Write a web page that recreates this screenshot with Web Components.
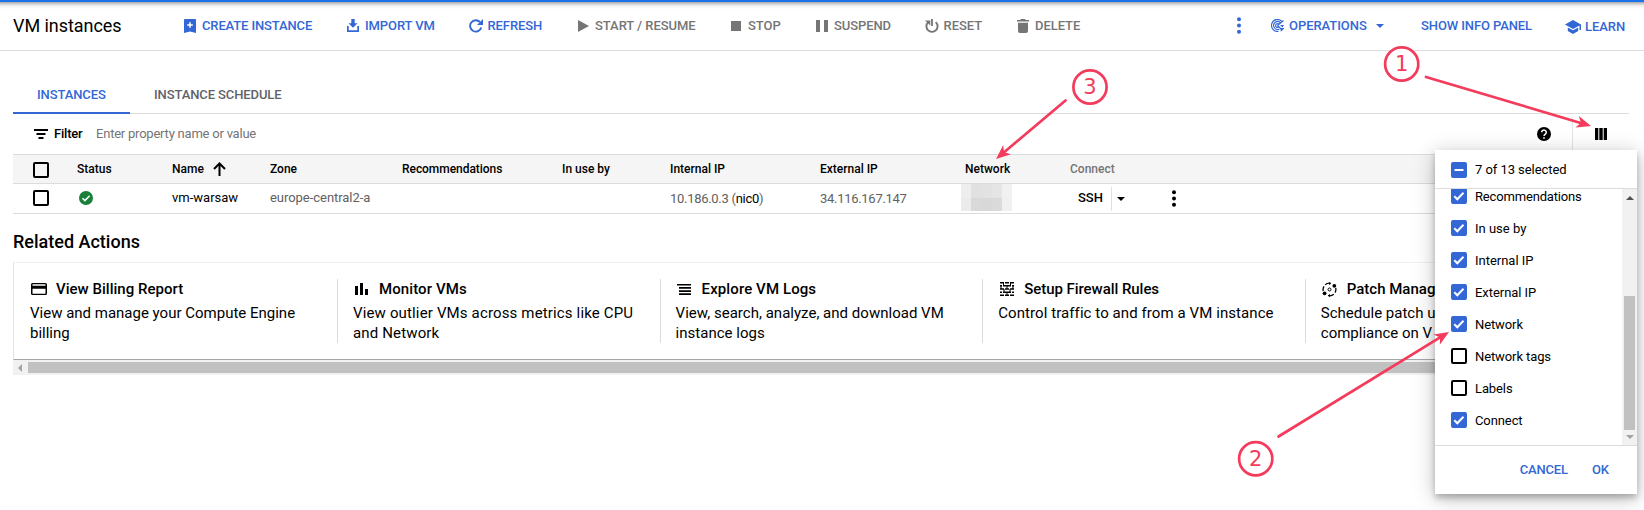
<!DOCTYPE html>
<html lang="en">
<head>
<meta charset="utf-8">
<title>VM instances</title>
<style>
html,body{margin:0;background:#fff;height:510px;overflow:hidden}
body{font-family:Roboto,"Liberation Sans",sans-serif;color:#000;position:relative}
</style>
</head>
<body>
<vm-page></vm-page>
<script>
const ICONS = {
  create: [12,14,'<path d="M1 0h10a1 1 0 0 1 1 1v13l-6-1.500L0 14V1a1 1 0 0 1 1-1z"/><path d="M6 3.200v5.600M3.200 6h5.600" stroke="#fff" stroke-width="1.500"/>'],
  import: [12,13,'<path d="M4.300 0h3.400v4.300H10.500L6 8.800 1.500 4.300h2.800zM0 7h1.700v4.300h8.600V7H12v6H0z"/>'],
  refresh: [14,14,'<path d="M12.300 8.500A5.700 5.700 0 1 1 11 3" fill="none" stroke="currentColor" stroke-width="1.900"/><path d="M14 0v6H8z"/>'],
  play: [11,12,'<path d="M0 0l11 6L0 12z"/>'],
  stop: [10,10,'<path d="M0 0h10v10H0z"/>'],
  pause: [12,12,'<path d="M0 0h4v12H0zM8 0h4v12H8z"/>'],
  reset: [14,14,'<path d="M3.300 3.100A5.600 5.600 0 1 0 10.700 3.100" fill="none" stroke="currentColor" stroke-width="1.900"/><path d="M6.100 0h1.800v7H6.100zM0 1.500h5.300v5z"/>'],
  trash: [12,14,'<path d="M4 0h4l.8.9H12v1.700H0V.9h3.200zM1 3.800h10V12a2 2 0 0 1-2 2H3a2 2 0 0 1-2-2z"/>'],
  dots: [4,17,'<circle cx="2" cy="2.300" r="2"/><circle cx="2" cy="8.500" r="2"/><circle cx="2" cy="14.700" r="2"/>'],
  ops: [13,13,'<g fill="none" stroke="currentColor" stroke-width="1.150"><path d="M7.500 12.400A6 6 0 1 1 10.800 2.300M8.500 9.900A3.900 3.900 0 1 1 9.300 3.700M7.700 8A1.900 1.900 0 1 1 8.200 5.600M6.500 6.500l4 3.700M6.500 6.500L12.500 1.500"/></g><path d="M9 6h4L11.500 8.500zM9.300 9h3.700v.8L9.800 12.800z"/>'],
  caret: [8,4,'<path d="M0 0h8L4 4z"/>'],
  learn: [16,14,'<path d="M8 0l8 4.500V10h-1.500V5.500L8 9 0 4.500zM2.800 7.500L8 10.300l5.200-2.800v3.400L8 14l-5.200-3.100z"/>'],
  filter: [14,10,'<path d="M0 0h14v2H0zM2.500 4h9v2h-9zM4.500 8h5v2h-5z"/>'],
  help: [14,14,'<circle cx="7" cy="7" r="7"/><path d="M4.700 5.300a2.300 2.200 0 1 1 3.600 1.800Q7 8 7 9" fill="none" stroke="#fff" stroke-width="1.500"/><path d="M6.200 10.200h1.600v1.600H6.200z" fill="#fff"/>'],
  columns: [12,12,'<path d="M0 0h3.300v12H0zM4.300 0h3.400v12H4.300zM8.700 0H12v12H8.700z"/>'],
  up: [13,14,'<path d="M6.500 14V1.500M1 7l5.500-5.500L12 7" fill="none" stroke="currentColor" stroke-width="2"/>'],
  ok: [14,14,'<circle cx="7" cy="7" r="7"/><path d="M3.500 7.200l2.400 2.400 4.700-4.800" fill="none" stroke="#fff" stroke-width="1.500"/>'],
  card: [16,12,'<path fill-rule="evenodd" d="M1.500 0h13A1.500 1.500 0 0 1 16 1.500v9a1.500 1.500 0 0 1-1.500 1.500h-13A1.500 1.500 0 0 1 0 10.500v-9A1.500 1.500 0 0 1 1.500 0zM1.500 1.300v1.400h13V1.300zM1.500 5.700v5h13v-5z"/>'],
  bars: [13,12,'<path d="M0 3h3v9H0zM5 0h3v12H5zM10 6h3v6h-3z"/>'],
  logs: [14,11,'<path d="M0 0h14v1.500H0zM2 3h12v1.700H2zM2 6.200h12v1.700H2zM2 9.300h12V11H2z"/>'],
  wall: [14,14,'<path d="M0 .7h4M5 .7h4M10 .7h4M0 3.800h2M3 3.800h8M12 3.800h2M0 7h4M5 7h4M10 7h4M0 10.200h2M3 10.200h8M12 10.200h2M0 13.300h4M5 13.300h4M10 13.300h4" stroke="currentColor" stroke-width="1.400"/><path d="M3.500 1v3M10.500 1v3M7 4v3M1 4v3M13 4v3M4 7v3M10 7v3M7 10v3" stroke="currentColor" stroke-width="1"/>'],
  patch: [15,15,'<g fill="none" stroke="currentColor" stroke-width="1.300"><path d="M1.200 9A6.300 6.300 0 0 1 2 4.300M3.200 2.700A6.300 6.300 0 0 1 8.500 1.300M13.700 6A6.300 6.300 0 0 1 13 10.700M11.800 12.300A6.300 6.300 0 0 1 6.500 13.700"/><circle cx="7.500" cy="7.500" r="1.500" stroke-width="1"/></g><circle cx="12.300" cy="3.800" r="1.900"/><circle cx="2.600" cy="11.300" r="1.900"/><path d="M7 0l2.300 1.600L7 3zM8 15l-2.300-1.600L8 12z"/>']
};
const define = (name, css, html) => customElements.define(name, class extends HTMLElement {
  connectedCallback() {
    if (this.shadowRoot) return;
    const a = n => this.getAttribute(n) ?? '';
    this.attachShadow({mode:'open'}).innerHTML =
      `<style>:host{display:block;box-sizing:border-box}${css}</style>` + (typeof html === 'function' ? html(a) : html);
  }
});

define('vm-icon', ':host{display:block;flex:none;line-height:0}svg{display:block;fill:currentColor}', a => {
  const [w,h,p] = ICONS[a('name')];
  return `<svg width="${w}" height="${h}" viewBox="0 0 ${w} ${h}">${p}</svg>`;
});

define('vm-check', `:host{flex:none;width:16px;height:16px}
  div{box-sizing:border-box;width:16px;height:16px;border:2px solid #000;border-radius:2px}
  :host([state]) div{background:#3367d6;border-color:#3367d6}
  svg{display:block;width:12px;height:12px}`, a => {
  const s = a('state');
  const d = s === 'on' ? 'M1.300 6.200l3 3 6.200-6.400' : s === 'some' ? 'M1.500 6h9' : '';
  return `<div>${d ? `<svg viewBox="0 0 12 12"><path d="${d}" fill="none" stroke="#fff" stroke-width="2"/></svg>` : ''}</div>`;
});

/* Toolbar button: --iw is the width of the icon column, --ls the label's letter spacing */
define('vm-button', `:host{display:grid;grid-auto-flow:column;justify-content:start;align-items:center;color:#3367d6;
    font:500 13px/20px Roboto,sans-serif;letter-spacing:var(--ls,-.05px);white-space:nowrap}
  :host([off]){color:#757575}.i{display:flex;width:var(--iw,18px)}`,
  a => `${a('icon') ? `<span class="i"><vm-icon name="${a('icon')}"></vm-icon></span>` : ''}<span><slot></slot></span>`);

define('vm-toolbar', `:host{height:51px;border-bottom:1px solid #dcdcdc;background:linear-gradient(#1a73e8 0 2px,#a8a8a8 2px,#d2d2d2 4px,#f2f2f2 6px,#fff 9px)}
  .bar{display:grid;grid-template-columns:171px 163px 122px 109px 153px 85px 109px 92px 220px 34px 105px 45px 144px 1fr;align-items:center;height:51px;padding-left:13px}
  h1{margin:0;font:400 18px/24px Roboto,sans-serif;letter-spacing:-.05px}`,
  `<div class="bar"><h1>VM instances</h1>
  <vm-button icon="create" style="--ls:-.13px">CREATE INSTANCE</vm-button>
  <vm-button icon="import" style="--ls:-.1px">IMPORT VM</vm-button>
  <vm-button icon="refresh" style="--iw:18.500px;--ls:-.1px">REFRESH</vm-button>
  <vm-button icon="play" off style="--iw:17px">START / RESUME</vm-button>
  <vm-button icon="stop" off style="--iw:17px">STOP</vm-button>
  <vm-button icon="pause" off style="--ls:-.1px">SUSPEND</vm-button>
  <vm-button icon="reset" off style="--iw:18.500px">RESET</vm-button>
  <vm-button icon="trash" off>DELETE</vm-button>
  <vm-button icon="dots"></vm-button>
  <vm-button icon="ops">OPERATIONS</vm-button>
  <vm-button icon="caret"></vm-button>
  <vm-button style="--ls:-.1px">SHOW INFO PANEL</vm-button>
  <vm-button icon="learn" style="--iw:20px;padding-top:2px">LEARN</vm-button></div>`);

define('vm-tabs', `:host{display:flex;margin:25px 15px 0 13px;height:38px;border-bottom:1px solid #dcdcdc;font:500 13px/37px Roboto,sans-serif;letter-spacing:-.11px;color:#5f6368}
  span{box-sizing:border-box;height:38px;padding:0 24px}.on{color:#3367d6;width:117px;border-bottom:2px solid #3367d6}`,
  `<span class="on">INSTANCES</span><span>INSTANCE SCHEDULE</span>`);

define('vm-filter', `:host{display:flex;align-items:center;height:40px;margin:0 15px 0 13px;padding-left:21px;font:13px/20px Roboto,sans-serif}
  b{font-weight:500;margin-left:6px;width:42px;letter-spacing:-.2px}.p{color:#757575;flex:1;letter-spacing:-.22px}
  .line{width:1px;height:34px;background:#e3e3e3;margin-left:21px}.c{margin:0 22px 0 22px}`,
  `<vm-icon name="filter"></vm-icon><b>Filter</b><span class="p">Enter property name or value</span>
   <vm-icon name="help"></vm-icon><span class="line"></span><vm-icon name="columns" class="c"></vm-icon>`);

define('vm-table', `:host{margin:0 15px 0 13px;font:13px/20px Roboto,sans-serif}
  .r{display:grid;grid-template-columns:44px 95px 98px 132px 160px 108px 150px 145px 105px 1fr;box-sizing:border-box;height:30px;padding-left:20px;align-items:center;border-bottom:1px solid #dcdcdc}
  .h{background:#f5f5f5;border-top:1px solid #dcdcdc;font-weight:500;font-size:12px}
  .h vm-check{margin-top:2px}.v vm-check,.v>vm-icon{margin-bottom:2px}
  .n{display:flex;gap:9px;align-items:center}.g{color:#616161}.z{padding-bottom:1px;letter-spacing:-.04px}.ip{padding-top:1px;letter-spacing:-.29px}
  .blur{display:grid;grid-template-columns:10px 10px 11px 10px 10px;grid-template-rows:14px 13px;width:51px;margin:-2px 0 0 -4px}
  .s{display:flex;align-items:center;padding-left:8px;font-weight:500}.s i{width:1px;height:24px;background:#e0e0e0;margin:0 5px 0 8px}.s b{font-weight:500;padding-bottom:1px}
  .s .d{margin-left:47px}`,
  `<div class="r h"><vm-check></vm-check><span>Status</span><span class="n">Name <vm-icon name="up"></vm-icon></span><span>Zone</span><span style="letter-spacing:-.05px">Recommendations</span><span>In use by</span><span>Internal IP</span><span>External IP</span><span>Network</span><span style="color:#757575">Connect</span></div>
   <div class="r v"><vm-check></vm-check><vm-icon name="ok" style="color:#188038;margin-left:2px"></vm-icon><span class="z" style="letter-spacing:0">vm-warsaw</span><span class="g z">europe-central2-a</span><span></span><span></span><span class="g ip">10.186.0.3 (<span style="color:#000">nic0</span>)</span><span class="g ip">34.116.167.147</span>
   <span class="blur"><i style="background:#eee"></i><i style="background:#e1e1e1"></i><i style="background:#e2e2e2"></i><i style="background:#e5e5e5"></i><i style="background:#f1f1f1"></i><i style="background:#ebebeb"></i><i style="background:#d9d9d9"></i><i style="background:#d8d8d8"></i><i style="background:#dadada"></i><i style="background:#f0f0f0"></i></span>
   <span class="s"><b>SSH</b><i></i><vm-icon name="caret"></vm-icon><vm-icon name="dots" class="d"></vm-icon></span></div>`);

define('vm-action', `:host{width:322.600px;flex:none;height:64px;padding-left:15px;border-right:1px solid #dcdcdc;font:15px/20px Roboto,sans-serif}
  .t{display:flex;align-items:center;height:20px;font-weight:500;margin-bottom:4px;letter-spacing:var(--tl,0)}
  .i{width:26px;padding-left:var(--ip,1px);box-sizing:border-box}p{margin:0;width:290px;letter-spacing:var(--pl,0)}`,
  a => `<div class="t"><span class="i"><vm-icon name="${a('icon')}"></vm-icon></span>${a('title')}</div><p><slot></slot></p>`);

define('vm-actions', `:host{margin:16px 15px 0 13px}
  h2{margin:0 0 8px;font:500 18px/24px Roboto,sans-serif}
  .box{display:flex;box-sizing:border-box;height:98px;overflow:hidden;padding-top:16px;border-top:1px solid #f1f1f1;border-left:1px solid #e3e3e3;border-bottom:1px solid #a6a6a6}
  .sb{display:flex;align-items:center;height:15px;background:#f1f1f1}
  .sb svg{margin:0 6px 0 5px}.th{height:11px;flex:1;background:#c1c1c1}`,
  `<h2>Related Actions</h2><div class="box">
  <vm-action icon="card" title="View Billing Report" style="width:324px;padding-left:16px;--tl:.02px">View and manage your Compute Engine billing</vm-action>
  <vm-action icon="bars" title="Monitor VMs" style="--ip:2px;--tl:.1px;--pl:.15px">View outlier VMs across metrics like CPU and Network</vm-action>
  <vm-action icon="logs" title="Explore VM Logs" style="--ip:1.500px;--tl:.1px;--pl:.02px">View, search, analyze, and download VM instance logs</vm-action>
  <vm-action icon="wall" title="Setup Firewall Rules" style="--ip:1.500px;--tl:-.05px;--pl:.08px">Control traffic to and from a VM instance</vm-action>
  <vm-action icon="patch" title="Patch Manag">Schedule patch u<br>compliance on V</vm-action></div>
  <div class="sb"><svg width="4" height="8"><path d="M4 0v8L0 4z" fill="#a3a3a3"/></svg><div class="th"></div></div>`);

define('vm-option', `:host{display:flex;align-items:center;gap:8px;height:32px;font:13px/20px Roboto,sans-serif;letter-spacing:var(--ls,-.1px)}
  vm-check{margin-bottom:var(--lift,2px)}`,
  a => `<vm-check ${a('state') ? `state="${a('state')}"` : ''}></vm-check><span><slot></slot></span>`);

define('vm-menu', `:host{position:absolute;left:1435px;top:150px;width:202px;height:344px;background:#fff;box-shadow:0 4px 6px rgba(0,0,0,.22),0 4px 20px rgba(0,0,0,.25)}
  .head{height:39px;padding:4px 0 0 16px;box-sizing:border-box;border-bottom:1px solid #dcdcdc;--ls:-.06px;--lift:0}
  .body{display:flex;height:257px;box-sizing:border-box;overflow:hidden;border-bottom:1px solid #dcdcdc}
  .list{flex:1;margin-top:-8px;padding-left:16px}
  .bar{width:15px;display:flex;flex-direction:column;align-items:center;background:#f1f1f1}
  .th{width:11px;height:134px;margin-top:96px;background:#c1c1c1}
  .foot{display:flex;justify-content:flex-end;gap:24px;padding:14px 28px 0 0}`,
  `<div class="head"><vm-option state="some">7 of 13 selected</vm-option></div>
  <div class="body"><div class="list"><vm-option state="on" style="--ls:-.17px">Recommendations</vm-option><vm-option state="on" style="--ls:0">In use by</vm-option><vm-option state="on" style="--ls:-.02px">Internal IP</vm-option><vm-option state="on" style="--ls:-.05px">External IP</vm-option><vm-option state="on">Network</vm-option><vm-option>Network tags</vm-option><vm-option>Labels</vm-option><vm-option state="on">Connect</vm-option></div>
  <div class="bar"><svg width="8" height="4" style="margin-top:7px;flex:none"><path d="M0 4h8L4 0z" fill="#505050"/></svg><div class="th"></div><svg width="8" height="4" style="margin-top:5px;flex:none"><path d="M0 0h8L4 4z" fill="#a3a3a3"/></svg></div></div>
  <div class="foot"><vm-button style="--ls:-.15px">CANCEL</vm-button><vm-button>OK</vm-button></div>`);

define('vm-notes', ':host{position:absolute;inset:0;pointer-events:none}svg{display:block}', () => {
  const mark = (n,x,y) => `<circle cx="${x}" cy="${y}" r="16.600" fill="#fff" stroke="#f43b5c" stroke-width="2.700"/><text x="${x}" y="${y+7.300}" text-anchor="middle" font-family="DejaVu Sans,sans-serif" font-size="21" fill="#f43b5c">${n}</text>`;
  const arrow = (x1,y1,x2,y2) => {
    const a = Math.atan2(y2-y1,x2-x1), deg = a*180/Math.PI;
    return `<path d="M${x1} ${y1}L${x2-9*Math.cos(a)} ${y2-9*Math.sin(a)}" stroke="#f43b5c" stroke-width="2.700" stroke-linecap="round"/><path transform="translate(${x2} ${y2}) rotate(${deg})" d="M0 0L-14.500-6-10.500 0-14.500 6z" fill="#f43b5c"/>`;
  };
  return `<svg width="1644" height="510">${arrow(1426,77,1591,126)}${arrow(1278.500,436.500,1449,332)}${arrow(1065.500,100.500,996,159)}${mark(1,1401.700,64)}${mark(2,1255.700,458.700)}${mark(3,1090,87)}</svg>`;
});

define('vm-page', ':host{height:510px;overflow:hidden}',
 `<vm-toolbar></vm-toolbar><vm-tabs></vm-tabs><vm-filter></vm-filter><vm-table></vm-table><vm-actions></vm-actions><vm-menu></vm-menu><vm-notes></vm-notes>`);
</script>
</body>
</html>
